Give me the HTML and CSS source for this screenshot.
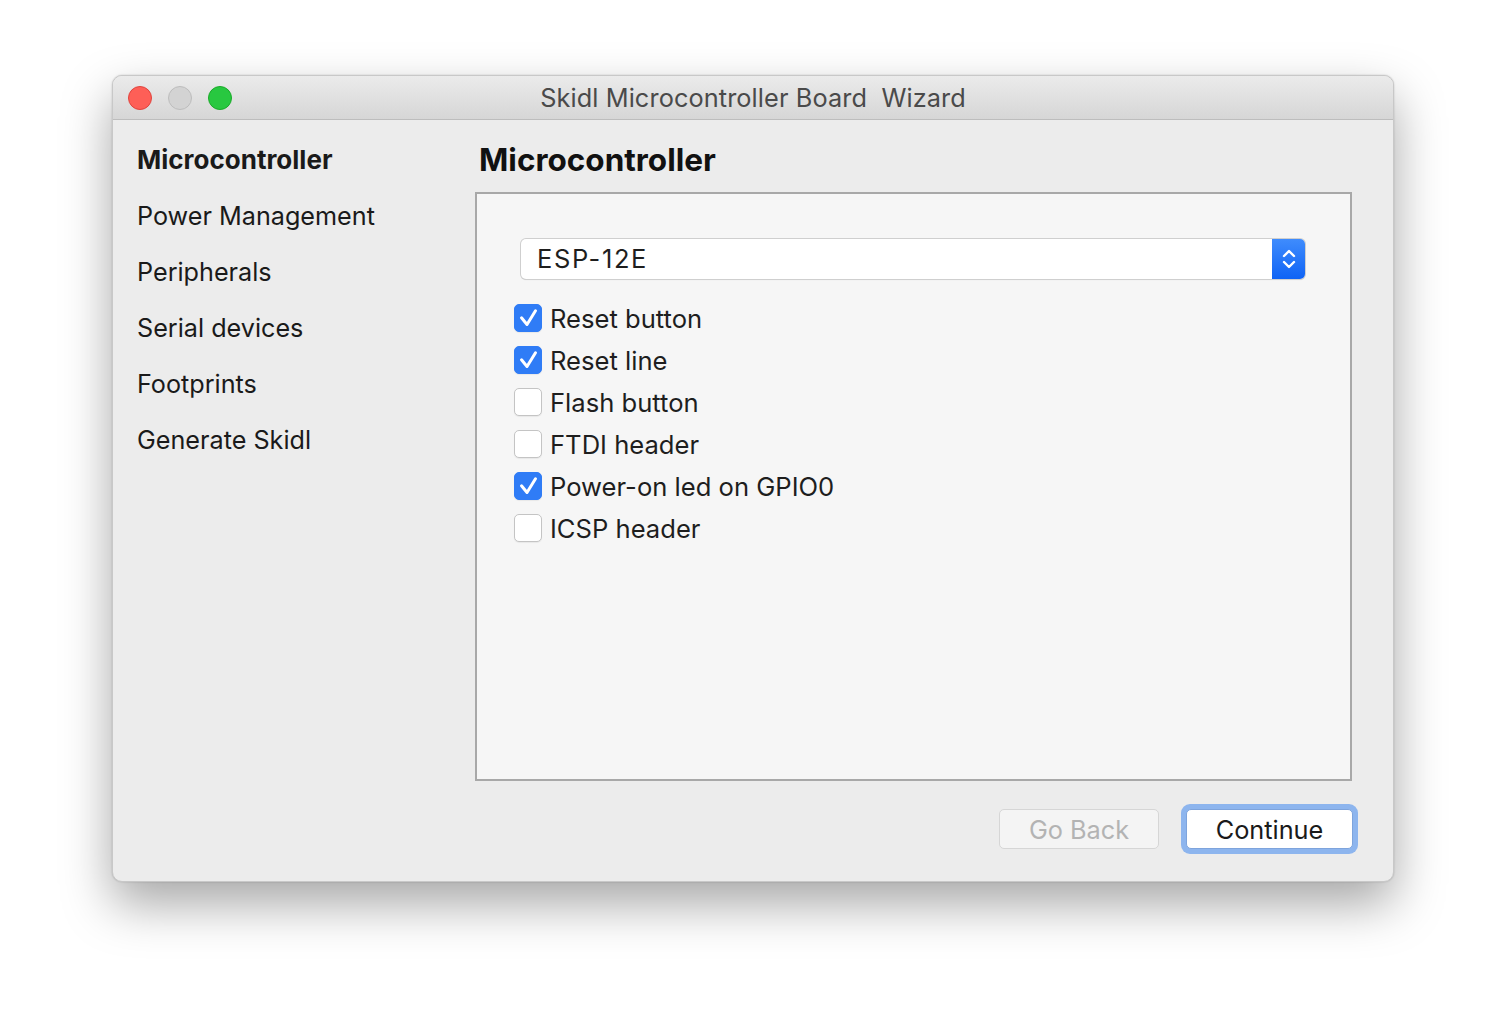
FILE: index.html
```html
<!DOCTYPE html>
<html>
<head>
<meta charset="utf-8">
<link rel="stylesheet" href="styles.css">
</head>
<body>
<div class="window">
  <div class="titlebar">
    <div class="lights">
      <span class="light red"></span>
      <span class="light gray"></span>
      <span class="light green"></span>
    </div>
    <div class="title">Skidl Microcontroller Board&nbsp; Wizard</div>
  </div>
  <div class="content">
    <nav class="sidebar">
      <div class="nav-item active">Microcontroller</div>
      <div class="nav-item">Power Management</div>
      <div class="nav-item">Peripherals</div>
      <div class="nav-item">Serial devices</div>
      <div class="nav-item">Footprints</div>
      <div class="nav-item">Generate Skidl</div>
    </nav>
    <main class="main">
      <h1 class="heading">Microcontroller</h1>
      <div class="panel">
        <div class="select">
          <span class="select-text">ESP-12E</span>
          <span class="stepper">
            <svg width="20" height="30" viewBox="0 0 20 30"><path d="M5 12 L10 7 L15 12 M5 18 L10 23 L15 18" fill="none" stroke="#fff" stroke-width="2.4" stroke-linecap="round" stroke-linejoin="round"/></svg>
          </span>
        </div>
        <div class="checks">
          <div class="check"><span class="box on"><svg width="28" height="28" viewBox="0 0 28 28"><path d="M7.5 13.8 L13 20.5 L21.5 6.8" fill="none" stroke="#fff" stroke-width="3" stroke-linecap="round" stroke-linejoin="round"/></svg></span><span class="label">Reset button</span></div>
          <div class="check"><span class="box on"><svg width="28" height="28" viewBox="0 0 28 28"><path d="M7.5 13.8 L13 20.5 L21.5 6.8" fill="none" stroke="#fff" stroke-width="3" stroke-linecap="round" stroke-linejoin="round"/></svg></span><span class="label">Reset line</span></div>
          <div class="check"><span class="box"></span><span class="label">Flash button</span></div>
          <div class="check"><span class="box"></span><span class="label">FTDI header</span></div>
          <div class="check"><span class="box on"><svg width="28" height="28" viewBox="0 0 28 28"><path d="M7.5 13.8 L13 20.5 L21.5 6.8" fill="none" stroke="#fff" stroke-width="3" stroke-linecap="round" stroke-linejoin="round"/></svg></span><span class="label">Power-on led on GPIO0</span></div>
          <div class="check"><span class="box"></span><span class="label">ICSP header</span></div>
        </div>
      </div>
      <div class="buttons">
        <button class="btn disabled">Go Back</button>
        <div class="focus-ring"><button class="btn primary">Continue</button></div>
      </div>
    </main>
  </div>
</div>
</body>
</html>
```
FILE: styles.css
```css
html, body {
  margin: 0;
  padding: 0;
  background: #ffffff;
}
body {
  width: 1506px;
  height: 1030px;
  overflow: hidden;
  padding-top: 75px;
  padding-left: 112px;
  box-sizing: border-box;
  font-family: Inter, "Noto Sans", sans-serif;
  color: #1e1e1e;
}
.window {
  width: 1282px;
  height: 807px;
  background: #ececec;
  border-radius: 10px;
  border: 1px solid #c8c8c8;
  box-sizing: border-box;
  box-shadow: 0 22px 50px rgba(0,0,0,0.35), 0 0 2px rgba(0,0,0,0.2);
  overflow: hidden;
  display: flex;
  flex-direction: column;
}
.titlebar {
  height: 44px;
  flex: none;
  background: linear-gradient(#ebebeb, #d6d6d6);
  border-bottom: 1px solid #bdbdbd;
  box-sizing: border-box;
  display: flex;
  align-items: center;
  position: relative;
}
.lights {
  display: flex;
  gap: 16px;
  padding-left: 15px;
}
.light {
  width: 24px;
  height: 24px;
  border-radius: 50%;
  box-sizing: border-box;
}
.red { background: #fe5f57; border: 1px solid #e0443e; }
.gray { background: #d3d3d3; border: 1px solid #bdbdbd; }
.green { background: #28c840; border: 1px solid #1aab29; }
.title {
  position: absolute;
  left: 0;
  right: 0;
  top: 6px;
  text-align: center;
  font-size: 25.3px;
  color: #4a4a4a;
  letter-spacing: 0.1px;
}
.content {
  flex: 1;
  display: flex;
}
.sidebar {
  width: 362px;
  flex: none;
  padding-top: 22px;
  padding-left: 24px;
  box-sizing: border-box;
}
.nav-item {
  font-size: 25.2px;
  height: 56px;
  line-height: 36px;
  color: #1a1a1a;
}
.nav-item.active {
  font-weight: 700;
  font-size: 26px;
}
.main {
  flex: 1;
  display: flex;
  flex-direction: column;
  padding-right: 42px;
}
.heading {
  margin: 18px 0 0 4px;
  font-size: 31.5px;
  font-weight: 700;
  line-height: 44px;
  height: 54px;
  color: #111;
}
.panel {
  width: 877px;
  height: 589px;
  box-sizing: border-box;
  border: 2px solid #a8a8a8;
  background: #f6f6f6;
  padding: 45px 45px 0 37px;
}
.select {
  height: 40px;
  background: #fff;
  border-radius: 5px;
  box-shadow: 0 0 0 1px #cfcfcf, 0 1px 1px rgba(0,0,0,0.15);
  display: flex;
  align-items: center;
  justify-content: space-between;
  margin-left: 7px;
}
.select-text {
  padding-left: 16px;
  padding-bottom: 2px;
  font-size: 25.5px;
  color: #1e1e1e;
  letter-spacing: 1.6px;
}
.stepper {
  width: 33px;
  height: 40px;
  background: linear-gradient(#3f8cfd, #0f63f5);
  border-radius: 0 5px 5px 0;
  display: flex;
  align-items: center;
  justify-content: center;
}
.checks {
  margin-top: 18px;
  display: flex;
  flex-direction: column;
}
.check {
  height: 42px;
  display: flex;
  align-items: center;
}
.box {
  width: 28px;
  height: 28px;
  border-radius: 5px;
  box-sizing: border-box;
  background: #fff;
  border: 1px solid #c4c4c4;
  box-shadow: 0 1px 1px rgba(0,0,0,0.06);
  display: flex;
  flex: none;
}
.box.on {
  background: #2f7cf6;
  border-color: #2f7cf6;
}
.box.on svg {
  margin: -1px;
}
.label {
  margin-left: 8px;
  font-size: 25.6px;
  color: #1e1e1e;
}
.buttons {
  display: flex;
  justify-content: flex-end;
  align-items: center;
  margin-top: 23px;
  margin-right: -6px;
  gap: 22px;
}
.btn {
  font-family: inherit;
  font-size: 25.3px;
  height: 40px;
  box-sizing: border-box;
  border-radius: 5px;
  padding: 0;
}
.btn.disabled {
  width: 160px;
  background: #f4f4f4;
  border: 1px solid #d6d6d6;
  color: #b3b3b3;
}
.focus-ring {
  padding: 5px;
  background: #8db5ee;
  border-radius: 9px;
}
.btn.primary {
  width: 167px;
  height: 40px;
  background: #fff;
  border: 1px solid #7ea4dc;
  color: #1a1a1a;
}
```
